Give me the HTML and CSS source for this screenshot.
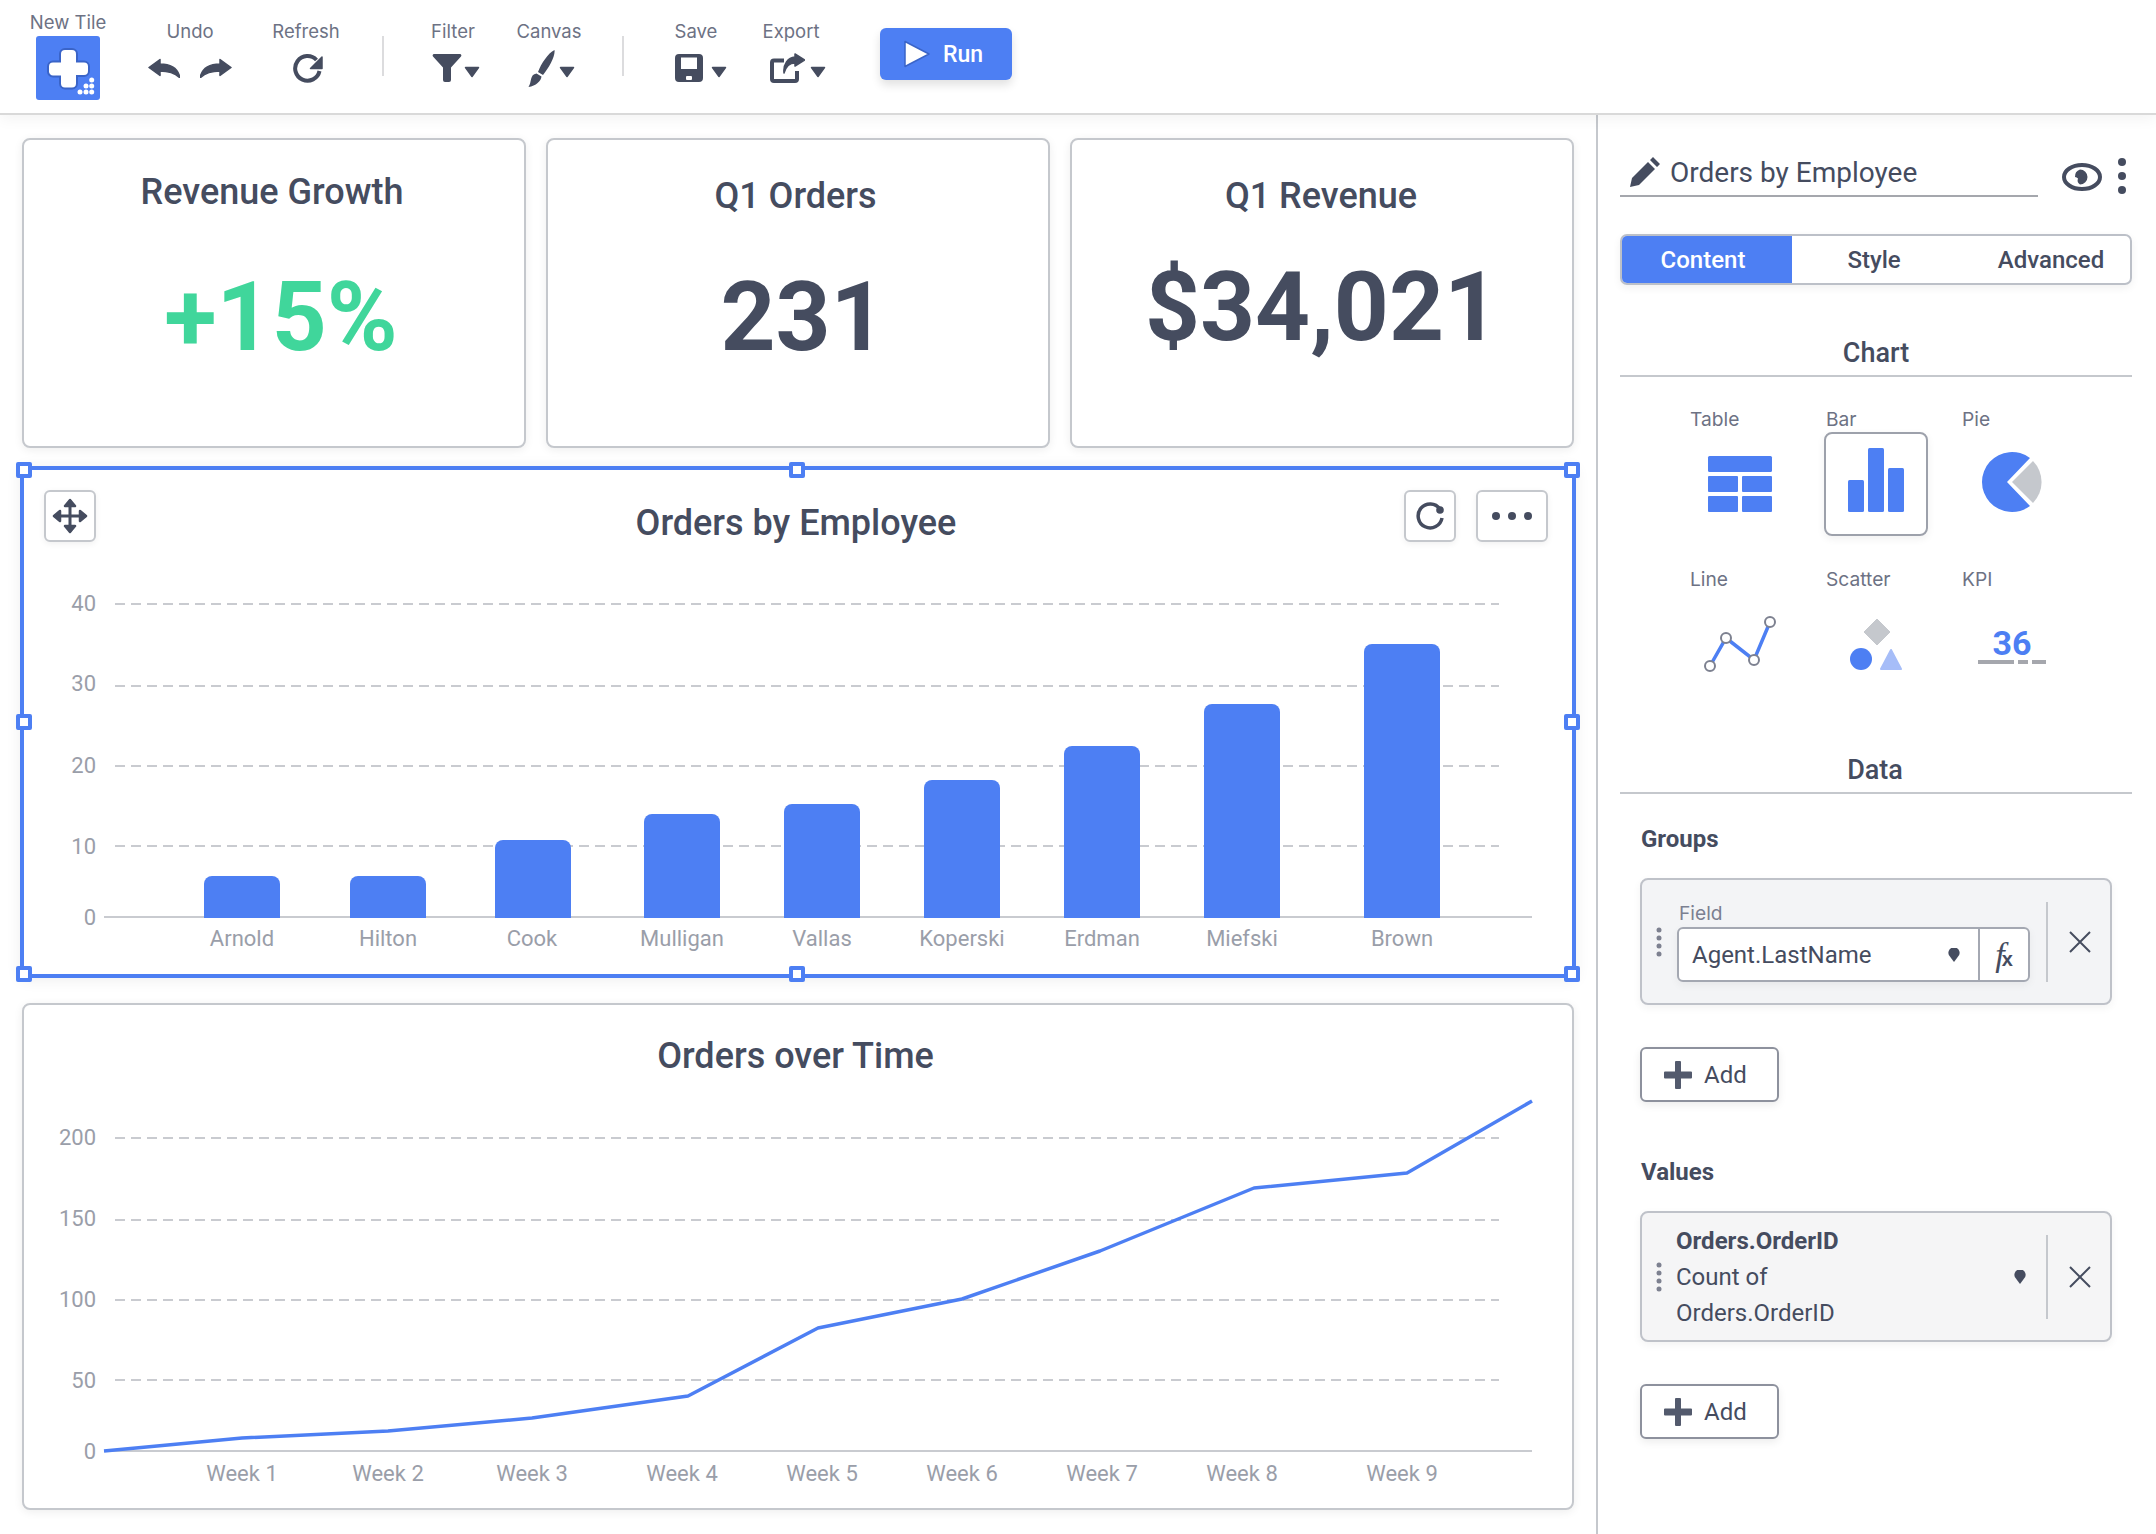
FILE: index.html
```html
<!DOCTYPE html>
<html lang="en">
<head>
<meta charset="utf-8">
<title>Dashboard editor</title>
<link rel="stylesheet" href="styles.css">
</head>
<body>
<header class="toolbar">
  <div class="tool tool-new">
    <span class="tool-label">New Tile</span>
    <svg class="new-tile" width="64" height="64" viewBox="0 0 64 64">
      <rect width="64" height="64" rx="3" fill="#4d7ff3"/>
      <path d="M29 13h7a5 5 0 0 1 5 5v7.500h7a5 5 0 0 1 5 5v4.500a5 5 0 0 1-5 5h-7v7.500a5 5 0 0 1-5 5h-7a5 5 0 0 1-5-5V40.500h-7a5 5 0 0 1-5-5V30.500a5 5 0 0 1 5-5h7V18a5 5 0 0 1 5-5z" fill="#fff" stroke="#3a64c8" stroke-width="2"/>
      <g fill="#fff"><circle cx="55.700" cy="44" r="2.500"/><circle cx="50" cy="50" r="2.500"/><circle cx="55.700" cy="50" r="2.500"/><circle cx="44" cy="56" r="2.500"/><circle cx="50" cy="56" r="2.500"/><circle cx="55.700" cy="56" r="2.500"/></g>
    </svg>
  </div>
  <div class="tool-group group-history">
    <div class="tool tool-undo">
      <span class="tool-label">Undo</span>
      <div class="tool-icon icons-undo">
        <svg width="32" height="20" viewBox="0 0 32 20"><path class="ink-stroke" d="M1 9.500 12 1.500V6c10 0 18 4 20 14-5-5-12-7-20-7v4.500z"/></svg>
        <svg width="32" height="20" viewBox="0 0 32 20"><path class="ink-stroke" d="M31 9.500 20 1.500V6C10 6 2 10 0 20c5-5 12-7 20-7v4.500z"/></svg>
      </div>
    </div>
    <div class="tool">
      <span class="tool-label">Refresh</span>
      <div class="tool-icon icon-refresh">
        <svg width="32" height="32" viewBox="0 0 32 32"><path d="M24.500 8A12.300 12.300 0 1 0 27.500 19" fill="none" stroke="#454c5f" stroke-width="4"/><path class="ink-stroke" d="M30 5v11.500H18.500z"/></svg>
      </div>
    </div>
  </div>
  <span class="tool-sep tool-sep-a"></span>
  <div class="tool-group group-view">
    <div class="tool">
      <span class="tool-label">Filter</span>
      <div class="tool-icon icon-row">
        <svg width="30" height="28" viewBox="0 0 30 28"><path class="ink" d="M2 0H28a1.500 1.500 0 0 1 1 2.500L19 13.500V26a2 2 0 0 1-2 2H13a2 2 0 0 1-2-2V13.500L1 2.500A1.500 1.500 0 0 1 2 0z"/></svg>
        <svg class="caret-small caret-filter" width="16" height="12" viewBox="0 0 16 12"><path class="ink-stroke" d="M1.500 1.500h13L8 10.500z"/></svg>
      </div>
    </div>
    <div class="tool">
      <span class="tool-label">Canvas</span>
      <div class="tool-icon icon-row">
        <svg width="27" height="37" viewBox="0 0 27 37"><path class="ink" d="M26.500 0C27.500 6 21 18 15 25l-5-3C13 14 20 3 26.500 0zM8.500 23.500l5 3C13 31 8 36 .5 37 4 32 1.500 24.500 8.500 23.500z"/></svg>
        <svg class="caret-small caret-canvas" width="16" height="12" viewBox="0 0 16 12"><path class="ink-stroke" d="M1.500 1.500h13L8 10.500z"/></svg>
      </div>
    </div>
  </div>
  <span class="tool-sep tool-sep-b"></span>
  <div class="tool-group group-file">
    <div class="tool">
      <span class="tool-label">Save</span>
      <div class="tool-icon icon-row">
        <svg width="28" height="28" viewBox="0 0 28 28"><path class="ink" fill-rule="evenodd" d="M4 0h20a4 4 0 0 1 4 4v20a4 4 0 0 1-4 4H4a4 4 0 0 1-4-4V4a4 4 0 0 1 4-4zM6 3.500V15H22V3.500zM12 22a1 1 0 0 0-1 1v2a1 1 0 0 0 1 1h4a1 1 0 0 0 1-1v-2a1 1 0 0 0-1-1z"/></svg>
        <svg class="caret-small caret-save" width="16" height="12" viewBox="0 0 16 12"><path class="ink-stroke" d="M1.500 1.500h13L8 10.500z"/></svg>
      </div>
    </div>
    <div class="tool">
      <span class="tool-label">Export</span>
      <div class="tool-icon icon-row">
        <svg width="35" height="30" viewBox="0 0 35 30"><path d="M14 7.500H4a2 2 0 0 0-2 2V26a2 2 0 0 0 2 2H25a2 2 0 0 0 2-2V18" fill="none" stroke="#454c5f" stroke-width="4"/><path class="ink-stroke" d="M25 1 34.500 7 25 13V10C20 10 16 13 14 20 13 11 18 4.500 25 4z"/></svg>
        <svg class="caret-small caret-export" width="16" height="12" viewBox="0 0 16 12"><path class="ink-stroke" d="M1.500 1.500h13L8 10.500z"/></svg>
      </div>
    </div>
  </div>
  <button class="run-button">
    <svg width="28" height="28" viewBox="0 0 28 28"><path d="M2 1.500 26 14 2 26.500z" fill="#fff" stroke="#3a64c8" stroke-width="1.500" stroke-linejoin="round"/></svg>
    <span>Run</span>
  </button>
</header>

<div class="workspace">
  <main class="canvas">
    <section class="kpi-row">
      <article class="card kpi kpi-growth">
        <h2 class="kpi-title">Revenue Growth</h2>
        <div class="kpi-value kpi-value-green">+15%</div>
      </article>
      <article class="card kpi kpi-orders">
        <h2 class="kpi-title">Q1 Orders</h2>
        <div class="kpi-value">231</div>
      </article>
      <article class="card kpi kpi-revenue">
        <h2 class="kpi-title">Q1 Revenue</h2>
        <div class="kpi-value">$34,021</div>
      </article>
    </section>

    <section class="chart-selected">
      <span class="handle h-tl"></span><span class="handle h-tc"></span><span class="handle h-tr"></span>
      <span class="handle h-ml"></span><span class="handle h-mr"></span>
      <span class="handle h-bl"></span><span class="handle h-bc"></span><span class="handle h-br"></span>
      <div class="chart-head">
        <div class="chart-actions">
          <button class="icon-btn">
            <svg width="38" height="38" viewBox="0 0 38 38"><g fill="none" stroke="#454c5f" stroke-width="3" stroke-linecap="round"><path d="M19 4v30M4 19h30"/></g><g fill="#454c5f" stroke="#454c5f" stroke-width="2.500" stroke-linejoin="round"><path d="M14 9 19 3 24 9zM14 29 19 35 24 29zM9 14 3 19 9 24zM29 14 35 19 29 24z"/></g></svg>
          </button>
        </div>
        <h2 class="chart-title">Orders by Employee</h2>
        <div class="chart-actions chart-actions-right">
          <button class="icon-btn">
            <svg width="30" height="30" viewBox="0 0 30 30"><path d="M25 8A12 12 0 1 0 27 17" fill="none" stroke="#454c5f" stroke-width="3.500"/><circle cx="25" cy="9" r="3.800" fill="#454c5f"/></svg>
          </button>
          <button class="icon-btn icon-btn-wide">
            <svg width="42" height="10" viewBox="0 0 42 10"><circle cx="5" cy="5" r="4" fill="#454c5f"/><circle cx="21" cy="5" r="4" fill="#454c5f"/><circle cx="37" cy="5" r="4" fill="#454c5f"/></svg>
          </button>
        </div>
      </div>
      <svg class="plot" width="1548" height="399" viewBox="24 575 1548 399">
        <g class="grid"><path d="M115 604H1499M115 686H1499M115 766H1499M115 846H1499"/></g>
        <path class="baseline" d="M104 917H1532"/>
        <g class="bars">
          <path d="M204 918V884a8 8 0 0 1 8-8h60a8 8 0 0 1 8 8v34z"/>
          <path d="M350 918V884a8 8 0 0 1 8-8h60a8 8 0 0 1 8 8v34z"/>
          <path d="M495 918V848a8 8 0 0 1 8-8h60a8 8 0 0 1 8 8v70z"/>
          <path d="M644 918V822a8 8 0 0 1 8-8h60a8 8 0 0 1 8 8v96z"/>
          <path d="M784 918V812a8 8 0 0 1 8-8h60a8 8 0 0 1 8 8v106z"/>
          <path d="M924 918V788a8 8 0 0 1 8-8h60a8 8 0 0 1 8 8v130z"/>
          <path d="M1064 918V754a8 8 0 0 1 8-8h60a8 8 0 0 1 8 8v164z"/>
          <path d="M1204 918V712a8 8 0 0 1 8-8h60a8 8 0 0 1 8 8v206z"/>
          <path d="M1364 918V652a8 8 0 0 1 8-8h60a8 8 0 0 1 8 8v266z"/>
        </g>
        <g class="axis axis-y">
          <text x="96" y="603">40</text><text x="96" y="683">30</text><text x="96" y="765">20</text><text x="96" y="846">10</text><text x="96" y="917">0</text>
        </g>
        <g class="axis axis-x">
          <text x="242" y="938">Arnold</text><text x="388" y="938">Hilton</text><text x="532" y="938">Cook</text><text x="682" y="938">Mulligan</text><text x="822" y="938">Vallas</text><text x="962" y="938">Koperski</text><text x="1102" y="938">Erdman</text><text x="1242" y="938">Miefski</text><text x="1402" y="938">Brown</text>
        </g>
      </svg>
    </section>

    <section class="card chart-plain">
      <h2 class="chart-title chart-title-plain">Orders over Time</h2>
      <svg class="plot" width="1548" height="418" viewBox="24 1090 1548 418">
        <g class="grid"><path d="M115 1138H1499M115 1220H1499M115 1300H1499M115 1380H1499"/></g>
        <path class="baseline" d="M104 1451H1532"/>
        <path class="trend" d="M104 1451 242 1438 388 1431 532 1418 688 1396 818 1328 962 1299 1100 1251 1254 1188 1407 1173 1532 1101"/>
        <g class="axis axis-y">
          <text x="96" y="1137">200</text><text x="96" y="1218">150</text><text x="96" y="1299">100</text><text x="96" y="1380">50</text><text x="96" y="1451">0</text>
        </g>
        <g class="axis axis-x">
          <text x="242" y="1473">Week 1</text><text x="388" y="1473">Week 2</text><text x="532" y="1473">Week 3</text><text x="682" y="1473">Week 4</text><text x="822" y="1473">Week 5</text><text x="962" y="1473">Week 6</text><text x="1102" y="1473">Week 7</text><text x="1242" y="1473">Week 8</text><text x="1402" y="1473">Week 9</text>
        </g>
      </svg>
    </section>
  </main>

  <aside class="sidebar">
    <div class="title-row">
      <div class="title-field">
        <svg width="30" height="30" viewBox="0 0 30 30"><path class="ink" d="M0 30l2-9L18 5l7 7L9 28zM20 3l3-3 7 7-3 3z"/></svg>
        <span>Orders by Employee</span>
      </div>
      <svg class="eye" width="40" height="28" viewBox="0 0 40 28"><ellipse cx="20" cy="14" rx="18" ry="12" fill="none" stroke="#454c5f" stroke-width="4"/><path class="ink" d="M18 6.500a7.500 7.500 0 1 1 0 15 5 5 0 0 1-2-6 4 4 0 0 0-3-1.500 7.500 7.500 0 0 1 5-7.500z"/></svg>
      <svg class="kebab" width="8" height="36" viewBox="0 0 8 36"><circle cx="4" cy="4" r="4" fill="#454c5f"/><circle cx="4" cy="18" r="4" fill="#454c5f"/><circle cx="4" cy="32" r="4" fill="#454c5f"/></svg>
    </div>

    <nav class="tabs">
      <span class="tab tab-active">Content</span>
      <span class="tab tab-style">Style</span>
      <span class="tab tab-advanced">Advanced</span>
    </nav>

    <h3 class="section-head section-chart">Chart</h3>
    <div class="chart-types">
      <div class="chart-type">
        <span class="type-label">Table</span>
        <div class="type-box">
          <svg width="100" height="100" viewBox="2 2 100 100"><g class="blue"><rect x="20" y="24" width="64" height="16" rx="1.500"/><rect x="20" y="44" width="30" height="16" rx="1"/><rect x="54" y="44" width="30" height="16" rx="1"/><rect x="20" y="64" width="30" height="16" rx="1"/><rect x="54" y="64" width="30" height="16" rx="1"/></g></svg>
        </div>
      </div>
      <div class="chart-type">
        <span class="type-label">Bar</span>
        <div class="type-box type-box-active">
          <svg width="100" height="100" viewBox="2 2 100 100"><g class="blue"><rect x="24" y="48" width="16" height="32" rx="1.500"/><rect x="44" y="16" width="16" height="64" rx="1.500"/><rect x="64" y="36" width="16" height="44" rx="1.500"/></g></svg>
        </div>
      </div>
      <div class="chart-type">
        <span class="type-label">Pie</span>
        <div class="type-box">
          <svg width="100" height="100" viewBox="2 2 100 100"><path class="blue" d="M47 50 70 26A30 30 0 1 0 70 74z"/><path d="M52 50 73 29A30 30 0 0 1 73 71z" fill="#c5c8cd"/></svg>
        </div>
      </div>
      <div class="chart-type">
        <span class="type-label">Line</span>
        <div class="type-box">
          <svg width="100" height="100" viewBox="2 2 100 100"><path d="M22 74 38 46 66 68 82 30" fill="none" stroke="#4d7ff3" stroke-width="3.500"/><g fill="#fff" stroke="#7d8190" stroke-width="2"><circle cx="22" cy="74" r="5"/><circle cx="38" cy="46" r="5"/><circle cx="66" cy="68" r="5"/><circle cx="82" cy="30" r="5"/></g></svg>
        </div>
      </div>
      <div class="chart-type">
        <span class="type-label">Scatter</span>
        <div class="type-box">
          <svg width="100" height="100" viewBox="2 2 100 100"><path d="M53 27 66 40 53 53 40 40z" fill="#c5c8cd" stroke="#c5c8cd" stroke-linejoin="round"/><circle class="blue" cx="37" cy="67" r="11"/><path d="M67 58 77 77H57z" fill="#a6bdf8" stroke="#a6bdf8" stroke-width="2" stroke-linejoin="round"/></svg>
        </div>
      </div>
      <div class="chart-type">
        <span class="type-label">KPI</span>
        <div class="type-box">
          <svg width="100" height="100" viewBox="2 2 100 100"><text class="kpi-glyph" x="52" y="63">36</text><g fill="#a5a7ad"><rect x="18" y="68" width="36" height="4"/><rect x="58" y="68" width="10" height="4"/><rect x="72" y="68" width="14" height="4"/></g></svg>
        </div>
      </div>
    </div>

    <h3 class="section-head section-data">Data</h3>
    <div class="data-block">
      <h4 class="group-title">Groups</h4>
      <div class="well">
        <svg class="grip" width="6" height="30" viewBox="0 0 6 30"><g fill="#7d8190"><circle cx="3" cy="3" r="2.500"/><circle cx="3" cy="11" r="2.500"/><circle cx="3" cy="19" r="2.500"/><circle cx="3" cy="27" r="2.500"/></g></svg>
        <div class="well-body">
          <span class="field-label">Field</span>
          <div class="field-input">
            <span class="field-text">Agent.LastName</span>
            <svg class="drop" width="12" height="14" viewBox="0 0 12 14"><path class="ink" d="M6 14 .8 7A5.600 5.600 0 1 1 11.200 7z"/></svg>
            <span class="fx"><i>f</i><b>x</b></span>
          </div>
        </div>
        <span class="well-rule"></span>
        <svg class="well-close" width="22" height="22" viewBox="0 0 22 22"><path d="M1 1 21 21M21 1 1 21" stroke="#454c5f" stroke-width="2"/></svg>
      </div>
      <button class="add-button">
        <svg width="28" height="28" viewBox="0 0 28 28"><path class="ink-soft" d="M11 1a1 1 0 0 1 1-1h4a1 1 0 0 1 1 1v9.500h10a1 1 0 0 1 1 1v5a1 1 0 0 1-1 1H17V27a1 1 0 0 1-1 1h-4a1 1 0 0 1-1-1v-9.500H1a1 1 0 0 1-1-1v-5a1 1 0 0 1 1-1h10z"/></svg>
        <span>Add</span>
      </button>

      <h4 class="group-title group-values">Values</h4>
      <div class="well well-values">
        <svg class="grip" width="6" height="30" viewBox="0 0 6 30"><g fill="#7d8190"><circle cx="3" cy="3" r="2.500"/><circle cx="3" cy="11" r="2.500"/><circle cx="3" cy="19" r="2.500"/><circle cx="3" cy="27" r="2.500"/></g></svg>
        <div class="value-text">
          <strong>Orders.OrderID</strong>
          <span>Count of</span>
          <span>Orders.OrderID</span>
        </div>
        <svg class="drop" width="12" height="14" viewBox="0 0 12 14"><path class="ink" d="M6 14 .8 7A5.600 5.600 0 1 1 11.200 7z"/></svg>
        <span class="well-rule well-rule-tall"></span>
        <svg class="well-close" width="22" height="22" viewBox="0 0 22 22"><path d="M1 1 21 21M21 1 1 21" stroke="#454c5f" stroke-width="2"/></svg>
      </div>
      <button class="add-button">
        <svg width="28" height="28" viewBox="0 0 28 28"><path class="ink-soft" d="M11 1a1 1 0 0 1 1-1h4a1 1 0 0 1 1 1v9.500h10a1 1 0 0 1 1 1v5a1 1 0 0 1-1 1H17V27a1 1 0 0 1-1 1h-4a1 1 0 0 1-1-1v-9.500H1a1 1 0 0 1-1-1v-5a1 1 0 0 1 1-1h10z"/></svg>
        <span>Add</span>
      </button>
    </div>
  </aside>
</div>
</body>
</html>
```

FILE: styles.css
```css
* { box-sizing: border-box; }

html, body {
  margin: 0;
  height: 100%;
  background: #fff;
}

body {
  width: 2156px;
  height: 1534px;
  overflow: hidden;
  display: flex;
  flex-direction: column;
  font-family: Roboto, "Liberation Sans", sans-serif;
  color: #454c5f;
}

h2, h3, h4 { margin: 0; }

button { font-family: inherit; cursor: pointer; }

svg { display: block; }

.ink { fill: #454c5f; }
.ink-stroke { fill: #454c5f; stroke: #454c5f; stroke-width: 1.500; stroke-linejoin: round; }
.ink-soft { fill: #535a6d; }
.blue { fill: #4d7ff3; }

/* Toolbar */
.toolbar {
  flex: none;
  position: relative;
  z-index: 2;
  height: 115px;
  display: flex;
  align-items: flex-start;
  padding: 10px 0 0 28px;
  background: #fff;
  border-bottom: 2px solid #d9d9d9;
  box-shadow: 0 4px 14px rgba(0, 0, 0, .05);
}

.tool {
  display: flex;
  flex-direction: column;
  align-items: center;
  width: 60px;
  padding-top: 9px;
}

.tool-new {
  width: 80px;
  padding-top: 0;
}

.tool-undo { width: 84px; }

.tool-label {
  font: 400 18.500px/24px Inter, "Liberation Sans", sans-serif;
  color: #6d7284;
  white-space: nowrap;
}

.new-tile { margin-top: 2px; }

.tool-icon {
  display: flex;
  align-items: center;
  height: 38px;
  margin-top: 6px;
  white-space: nowrap;
}

.icons-undo { gap: 20px; }
.icon-refresh { margin-left: 3px; }
.icon-row { align-self: flex-start; margin-left: 9px; }

.caret-small { margin-top: 8px; }
.caret-filter { margin-left: 2px; }
.caret-canvas { margin-left: 4px; }
.caret-save { margin-left: 8px; }
.caret-export { margin-left: 5px; }

.tool-group { display: flex; }

.group-history { margin-left: 40px; gap: 44px; }
.group-view { margin-left: 39px; gap: 36px; }
.group-file { margin-left: 42px; gap: 35px; }

.tool-sep {
  width: 2px;
  height: 40px;
  margin-top: 26px;
  background: #dcdcde;
}

.tool-sep-a { margin-left: 46px; }
.tool-sep-b { margin-left: 43px; }

.run-button {
  display: flex;
  align-items: center;
  gap: 12px;
  width: 132px;
  height: 52px;
  margin: 18px 0 0 59px;
  padding: 0 0 0 23px;
  border: 0;
  border-radius: 6px;
  background: #4d7ff3;
  color: #fff;
  font-size: 23px;
  font-weight: 500;
  box-shadow: 0 5px 10px rgba(0, 0, 0, .12);
}

/* Layout */
.workspace {
  flex: 1;
  display: flex;
  min-height: 0;
}

.canvas {
  width: 1596px;
  flex: none;
  padding: 23px 22px 0 22px;
}

.card {
  background: #fff;
  border: 2px solid #c5c8cd;
  border-radius: 8px;
  box-shadow: 0 2px 10px rgba(0, 0, 0, .07);
}

/* KPI cards */
.kpi-row {
  display: grid;
  grid-template-columns: repeat(3, 504px);
  gap: 20px;
}

.kpi {
  height: 310px;
  display: flex;
  flex-direction: column;
  align-items: center;
}

.kpi-title {
  font-size: 36px;
  line-height: 44px;
  font-weight: 500;
}

.kpi-value {
  font-size: 96px;
  line-height: 108px;
  font-weight: 700;
  color: #454c5f;
}

.kpi-growth { padding: 30px 0 0; }
.kpi-growth .kpi-title { margin-right: 4px; }
.kpi-growth .kpi-value { margin: 49px 0 0 14px; }
.kpi-orders { padding: 34px 0 0; }
.kpi-orders .kpi-title { margin-right: 5px; }
.kpi-orders .kpi-value { margin: 45px 0 0 10px; }
.kpi-revenue { padding: 34px 0 0; }
.kpi-revenue .kpi-title { margin-right: 2px; }
.kpi-revenue .kpi-value { margin-top: 35px; }

.kpi-value-green { color: #40d69b; }

/* Selected chart */
.chart-selected {
  position: relative;
  width: 1556px;
  height: 512px;
  margin: 18px 0 0 -2px;
  background: #fff;
  border: 4px solid #4d7ff3;
  box-shadow: 0 2px 14px rgba(0, 0, 0, .07);
}

.handle {
  position: absolute;
  width: 16px;
  height: 16px;
  background: #fff;
  border: 4px solid #4d7ff3;
  border-radius: 2px;
}

.h-tl, .h-ml, .h-bl { left: -8px; }
.h-tc, .h-bc { left: 765px; }
.h-tr, .h-mr, .h-br { right: -8px; }
.h-tl, .h-tc, .h-tr { top: -8px; }
.h-ml, .h-mr { top: 244px; }
.h-bl, .h-bc, .h-br { bottom: -8px; }

.chart-head {
  display: grid;
  grid-template-columns: 1fr auto 1fr;
  align-items: start;
  height: 105px;
  padding: 20px 24px 0 20px;
}

.chart-title {
  font-size: 36px;
  line-height: 44px;
  font-weight: 500;
  text-align: center;
  margin-top: 11px;
}

.chart-actions { display: flex; gap: 20px; }
.chart-actions-right { justify-content: flex-end; }

.icon-btn {
  width: 52px;
  height: 52px;
  display: flex;
  align-items: center;
  justify-content: center;
  padding: 0;
  background: #fff;
  border: 2px solid #c5c8cd;
  border-radius: 6px;
  box-shadow: 0 2px 6px rgba(0, 0, 0, .06);
}

.icon-btn-wide { width: 72px; }

/* Plots */
.plot { overflow: visible; }

.grid path {
  fill: none;
  stroke: #c9cbd0;
  stroke-width: 2;
  stroke-dasharray: 10 6;
}

.baseline { fill: none; stroke: #c9cbd0; stroke-width: 2; }
.bars path { fill: #4d7ff3; }
.trend { fill: none; stroke: #4d7ff3; stroke-width: 3.500; stroke-linejoin: round; }

.axis text {
  font: 400 22px Roboto, sans-serif;
  fill: #9a9ea9;
  dominant-baseline: central;
}

.axis-y text { text-anchor: end; }
.axis-x text { text-anchor: middle; }

/* Second chart */
.chart-plain {
  width: 1552px;
  height: 507px;
  margin-top: 25px;
}

.chart-title-plain {
  height: 85px;
  margin: 0;
  padding: 29px 5px 0 0;
}

/* Sidebar */
.sidebar {
  flex: 1;
  border-left: 2px solid #c5c8cd;
  padding: 35px 24px 0 22px;
  background: #fff;
}

.title-row {
  display: flex;
  align-items: center;
  height: 47px;
}

.title-field {
  display: flex;
  align-items: center;
  gap: 10px;
  width: 418px;
  height: 47px;
  padding: 0 0 1px 10px;
  border-bottom: 2px solid #a5a7ad;
  font-size: 28px;
  white-space: nowrap;
}

.eye { margin: 6px 0 0 24px; }
.kebab { margin: 4px 0 0 16px; }

.tabs {
  display: grid;
  grid-template-columns: 170px 164px 1fr;
  height: 51px;
  margin-top: 37px;
  border: 2px solid #bcc0c8;
  border-radius: 7px;
  overflow: hidden;
  box-shadow: 0 3px 8px rgba(0, 0, 0, .06);
  font-size: 24px;
  font-weight: 500;
}

.tab {
  display: flex;
  align-items: center;
  justify-content: center;
}

.tab-active { background: #4d7ff3; color: #fff; padding-right: 8px; }
.tab-advanced { padding-left: 16px; }

.section-head {
  height: 42px;
  padding-top: 1px;
  border-bottom: 2px solid #c5c8cd;
  font-size: 27px;
  line-height: 34px;
  font-weight: 500;
  text-align: center;
}

.section-chart { margin-top: 50px; }
.section-data { margin-top: 56px; padding-right: 2px; }

.chart-types {
  display: grid;
  grid-template-columns: repeat(3, 104px);
  column-gap: 32px;
  row-gap: 31px;
  margin: 30px 0 0 68px;
}

.type-label {
  display: block;
  height: 25px;
  padding-left: 2px;
  font: 400 19.200px/24px Inter, "Liberation Sans", sans-serif;
  color: #6d7284;
}

.type-box {
  width: 104px;
  height: 104px;
  border: 2px solid transparent;
  border-radius: 8px;
}

.type-box-active {
  border-color: #9da1ab;
  box-shadow: 0 3px 8px rgba(0, 0, 0, .06);
}

.kpi-glyph {
  font: 700 34px Roboto, sans-serif;
  fill: #4d7ff3;
  text-anchor: middle;
}

.data-block { padding-left: 20px; }

.group-title {
  margin: 30px 0 0 1px;
  height: 30px;
  font-size: 24px;
  line-height: 30px;
  font-weight: 700;
}

.group-values { margin-top: 55px; }

.well {
  display: flex;
  align-items: center;
  width: 472px;
  height: 127px;
  margin-top: 24px;
  padding-left: 14px;
  background: #f3f4f6;
  border: 2px solid #bfc2c9;
  border-radius: 8px;
  box-shadow: 0 3px 8px rgba(0, 0, 0, .05);
}

.well-values {
  height: 131px;
  background: #f5f5f6;
}

.grip { flex: none; }

.well-body {
  width: 353px;
  margin-left: 15px;
}

.field-label {
  display: block;
  height: 26px;
  padding-left: 2px;
  font: 400 19.200px/24px Inter, "Liberation Sans", sans-serif;
  color: #7b8091;
}

.field-input {
  display: flex;
  align-items: center;
  height: 55px;
  padding-left: 13px;
  background: #fff;
  border: 2px solid #a4a8b2;
  border-radius: 6px;
  box-shadow: 0 3px 8px rgba(0, 0, 0, .05);
  font-size: 24px;
}

.field-text { flex: 1; }

.drop { flex: none; }

.fx {
  flex: none;
  width: 50px;
  height: 100%;
  margin-left: 18px;
  display: flex;
  align-items: center;
  justify-content: center;
  border-left: 2px solid #a4a8b2;
  font-family: "Liberation Serif", serif;
}

.fx i {
  font-size: 34px;
  font-weight: 400;
  line-height: 1;
}

.fx b {
  font: 700 20px/1 "Liberation Sans", sans-serif;
  margin: 8px 0 0 -3px;
}

.well-rule {
  flex: none;
  width: 2px;
  height: 80px;
  margin-left: 16px;
  background: #c5c8cd;
}

.well-rule-tall {
  height: 84px;
  margin-left: 20px;
}

.well-close {
  flex: none;
  margin-left: 21px;
}

.value-text {
  flex: none;
  width: 338px;
  display: flex;
  flex-direction: column;
  margin-left: 14px;
  font-size: 24px;
  line-height: 36px;
}

.value-text strong { font-weight: 700; }

.add-button {
  display: flex;
  align-items: center;
  gap: 12px;
  width: 139px;
  height: 55px;
  margin-top: 42px;
  padding: 0 0 0 22px;
  background: #fff;
  border: 2px solid #8d919d;
  border-radius: 6px;
  box-shadow: 0 3px 8px rgba(0, 0, 0, .08);
  color: #454c5f;
  font-size: 24px;
}
```
